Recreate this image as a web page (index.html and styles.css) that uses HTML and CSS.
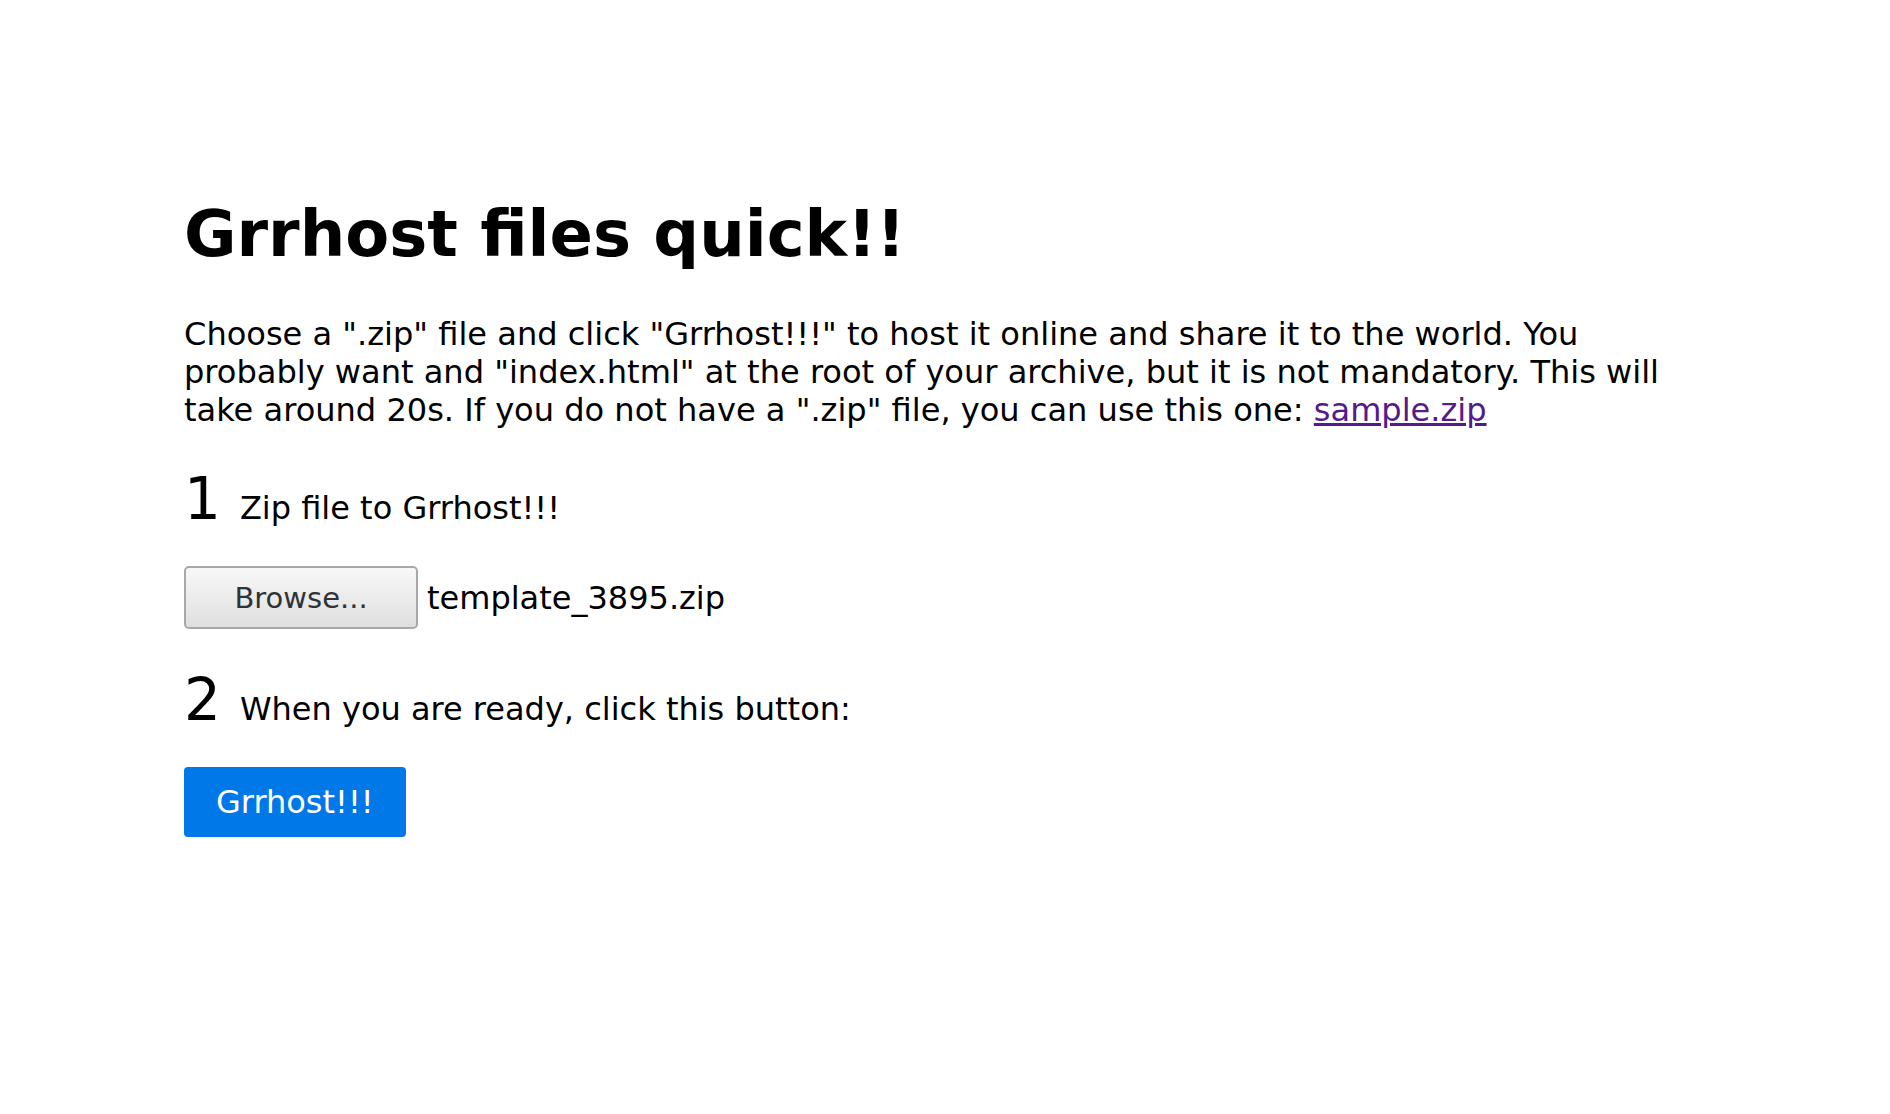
FILE: index.html
```html
<!DOCTYPE html>
<html lang="en">
<head>
<meta charset="utf-8">
<title>Grrhost files quick!!</title>
<link rel="stylesheet" href="styles.css">
</head>
<body>
<main class="page">
  <h1 class="title">Grrhost files quick!!</h1>
  <p class="intro">Choose a ".zip" file and click "Grrhost!!!" to host it online and share it to the world. You probably want and "index.html" at the root of your archive, but it is not mandatory. This will take around 20s. If you do not have a ".zip" file, you can use this one: <a class="link" href="#">sample.zip</a></p>
  <div class="step step-one"><span class="num">1</span><span class="label">Zip file to Grrhost!!!</span></div>
  <div class="file-row">
    <button class="browse" type="button">Browse...</button>
    <span class="file-name">template_3895.zip</span>
  </div>
  <div class="step step-two"><span class="num">2</span><span class="label">When you are ready, click this button:</span></div>
  <button class="submit" type="button">Grrhost!!!</button>
</main>
</body>
</html>
```
FILE: styles.css
```css
html, body {
  margin: 0;
  padding: 0;
  background: #ffffff;
}

body {
  font-family: "DejaVu Sans", "Liberation Sans", sans-serif;
  color: #000000;
  font-size: 32px;
}

.page {
  width: 1522px;
  margin: 0 auto;
  padding-top: 197px;
}

.title {
  margin: 0;
  font-size: 64px;
  font-weight: bold;
  line-height: normal;
}

.intro {
  margin: 44px 0 0;
  font-size: 32.06px;
  line-height: normal;
}

.link {
  color: #551a8b;
  text-decoration: underline;
}

.step {
  font-size: 32px;
  line-height: normal;
}

.step-one {
  margin-top: 36px;
}

.step-two {
  margin-top: 37px;
}

.num {
  font-size: 58px;
  margin-right: 19px;
}

.file-row {
  display: flex;
  align-items: center;
  gap: 9px;
  margin-top: 33px;
}

.browse {
  box-sizing: border-box;
  width: 234px;
  height: 63px;
  padding: 0;
  border: 2px solid #a8a8a8;
  border-radius: 5px;
  background: linear-gradient(#f8f8f8, #dfdfdf);
  font-family: "DejaVu Sans", sans-serif;
  font-size: 29px;
  color: #2e3436;
}

.file-name {
  font-size: 32px;
}

.submit {
  display: block;
  margin-top: 33px;
  padding: 16px 32px;
  border: none;
  border-radius: 4px;
  background: #0078e7;
  color: #ffffff;
  font-family: "DejaVu Sans", sans-serif;
  font-size: 32px;
  line-height: normal;
}
```
